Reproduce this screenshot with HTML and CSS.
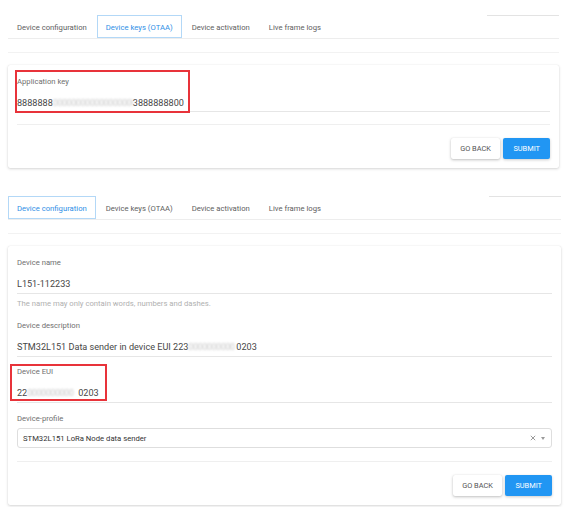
FILE: index.html
```html
<!DOCTYPE html>
<html>
<head>
<meta charset="utf-8">
<link rel="stylesheet" href="styles.css">
</head>
<body>
<section class="panel panel-a">
  <div class="tabbar">
    <div class="tab">Device configuration</div>
    <div class="tab active">Device keys (OTAA)</div>
    <div class="tab">Device activation</div>
    <div class="tab">Live frame logs</div>
    <div class="tab-tail"></div>
  </div>
  <div class="rule"></div>
  <div class="card card-a">
    <div class="field">
      <div class="label">Application key</div>
      <div class="value">8888888<span class="blur blur-key">00000000000000000000</span>3888888800</div>
      <div class="mark mark-key"></div>
    </div>
    <div class="divider divider-a"></div>
    <div class="actions">
      <button class="btn btn-back">GO BACK</button>
      <button class="btn btn-submit">SUBMIT</button>
    </div>
  </div>
</section>

<section class="panel panel-b">
  <div class="tabbar">
    <div class="tab active">Device configuration</div>
    <div class="tab">Device keys (OTAA)</div>
    <div class="tab">Device activation</div>
    <div class="tab">Live frame logs</div>
    <div class="tab-tail"></div>
  </div>
  <div class="rule"></div>
  <div class="card card-b">
    <div class="field">
      <div class="label">Device name</div>
      <div class="value">L151-112233</div>
      <div class="helper">The name may only contain words, numbers and dashes.</div>
    </div>
    <div class="field field-gap-lg">
      <div class="label">Device description</div>
      <div class="value">STM32L151 Data sender in device EUI 223<span class="blur blur-desc">0000000000</span>0203</div>
    </div>
    <div class="field field-gap">
      <div class="label">Device EUI</div>
      <div class="value">22<span class="blur blur-eui">0000000000</span>0203</div>
      <div class="mark mark-eui"></div>
    </div>
    <div class="field field-gap-md">
      <div class="label">Device-profile</div>
      <div class="select">
        <span class="select-text">STM32L151 LoRa Node data sender</span>
        <svg class="clear" width="6" height="6" viewBox="0 0 6 6"><path d="M0.8 0.8 L5.2 5.2 M5.2 0.8 L0.8 5.2" stroke="#9a9a9a" stroke-width="1" fill="none"/></svg>
        <span class="caret"></span>
      </div>
    </div>
    <div class="divider divider-b"></div>
    <div class="actions">
      <button class="btn btn-back">GO BACK</button>
      <button class="btn btn-submit">SUBMIT</button>
    </div>
  </div>
</section>
</body>
</html>
```

FILE: styles.css
```css
* { box-sizing: border-box; }
html, body { margin: 0; padding: 0; background: #fff; }
body { font-family: Roboto, "Noto Sans", "Liberation Sans", sans-serif; color: #444; }

.panel { margin-left: 8px; }
.panel-a { width: 551px; padding-top: 15px; }
.panel-b { width: 553px; margin-top: 28px; padding-bottom: 3px; }

.tabbar {
  display: flex;
  align-items: flex-start;
  border-bottom: 1px solid #ededed;
  height: 24px;
}
.tab {
  height: 23px;
  line-height: 23px;
  padding: 0 8px;
  margin-right: 1px;
  font-size: 7.7px;
  color: #606060;
  border: 1px solid transparent;
  white-space: nowrap;
}
.tab.active {
  color: #2f8fe6;
  border-color: #b3d8f7;
  background: #fff;
}
.tab-tail {
  margin-left: auto;
  width: 72px;
  border-top: 1px solid #e3e3e3;
}

.rule {
  margin-top: 13px;
  border-top: 1px solid #f2f2f2;
}

.card {
  margin-top: 12px;
  background: #fff;
  border-radius: 2px;
  box-shadow: 0 1px 3px rgba(0,0,0,0.16), 0 0 1px rgba(0,0,0,0.12);
  padding: 12px 9px 9px;
}

.field { position: relative; }
.field-gap { margin-top: 10px; }
.field-gap-md { margin-top: 11px; }
.field-gap-lg { margin-top: 12px; }

.label {
  font-size: 7.7px;
  line-height: 10px;
  color: #6f6f6f;
}
.value {
  margin-top: 10px;
  font-size: 9.1px;
  line-height: 12px;
  padding-bottom: 2px;
  border-bottom: 1px solid #e6e6e6;
  color: #474747;
  white-space: nowrap;
}
.card-b .value { padding-bottom: 3px; }
.helper {
  margin-top: 5px;
  font-size: 7.7px;
  line-height: 10px;
  color: #b0b0b0;
}

.blur {
  display: inline-block;
  vertical-align: top;
  overflow: hidden;
  color: #c9c9c9;
  filter: blur(1.1px);
  letter-spacing: -0.5px;
}
.blur-key { width: 80px; }
.blur-desc { width: 48px; }
.blur-eui { width: 51px; }

.mark {
  position: absolute;
  border: 2px solid #e8333a;
}
.mark-key { left: -2px; top: -7px; width: 175px; height: 43px; }
.mark-eui { left: -7px; top: -3px; width: 97px; height: 37px; }

.select {
  margin-top: 4px;
  height: 20px;
  border: 1px solid #dedede;
  border-radius: 3px;
  display: flex;
  align-items: center;
  padding: 0 6px 0 5px;
}
.select-text {
  flex: 1;
  font-size: 7.7px;
  color: #333;
}
.clear { margin-right: 5px; }
.caret {
  width: 0;
  height: 0;
  border-left: 2.5px solid transparent;
  border-right: 2.5px solid transparent;
  border-top: 3px solid #9a9a9a;
}

.divider { border-top: 1px solid #efefef; }
.divider-a { margin-top: 12px; }
.divider-b { margin-top: 13px; }

.actions {
  margin-top: 13px;
  display: flex;
  justify-content: flex-end;
  gap: 3px;
}
.btn {
  height: 21px;
  border: 0;
  border-radius: 2px;
  font-family: Roboto, "Noto Sans", "Liberation Sans", sans-serif;
  font-size: 7.4px;
  font-weight: 400;
  padding: 0 9.5px;
  cursor: pointer;
}
.btn-back {
  background: #fff;
  color: #555;
  box-shadow: 0 1px 3px rgba(0,0,0,0.25), 0 0 1px rgba(0,0,0,0.1);
}
.btn-submit {
  background: #2196f3;
  color: #fff;
  padding: 0 10px;
  box-shadow: 0 1px 3px rgba(0,0,0,0.2);
}
```
